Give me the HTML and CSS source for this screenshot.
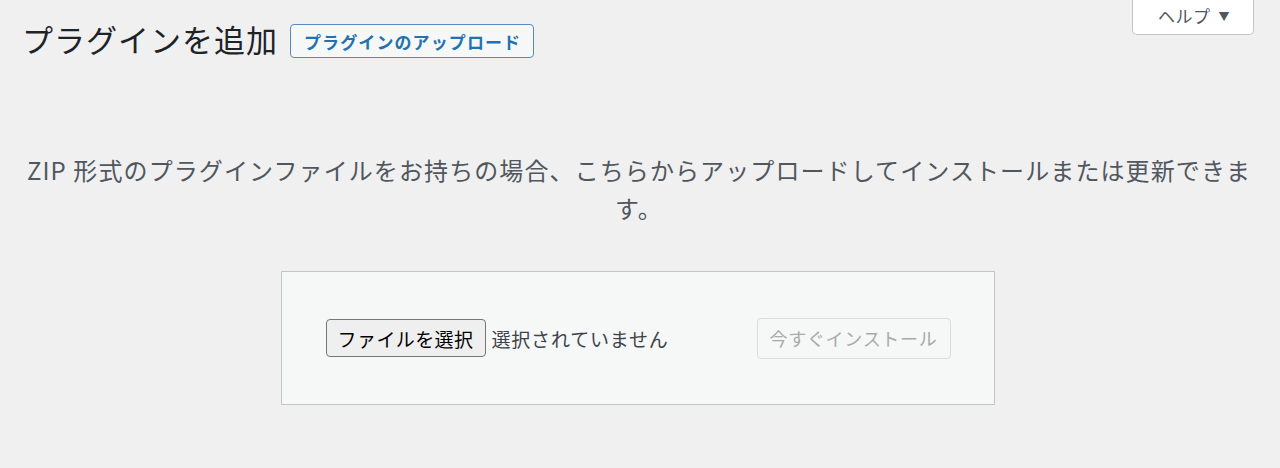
FILE: index.html
```html
<!DOCTYPE html>
<html lang="ja">
<head>
<meta charset="utf-8">
<title>プラグインを追加</title>
<link rel="stylesheet" href="styles.css">
</head>
<body>
<div class="screen-meta">
  <button class="help-tab" type="button">ヘルプ <span class="arrow">▼</span></button>
</div>
<div class="wrap">
  <div class="page-head">
    <h1 class="page-title">プラグインを追加</h1>
    <a class="title-action" href="#">プラグインのアップロード</a>
  </div>
  <div class="upload-plugin">
    <p class="install-help">ZIP 形式のプラグインファイルをお持ちの場合、こちらからアップロードしてインストールまたは更新できます。</p>
    <div class="form-row">
      <form class="upload-form">
        <div class="file-field">
          <span class="file-btn">ファイルを選択</span>
          <span class="file-name">選択されていません</span>
        </div>
        <button class="install-btn" type="button" disabled>今すぐインストール</button>
      </form>
    </div>
  </div>
</div>
</body>
</html>
```

FILE: styles.css
```css
html, body {
  margin: 0;
  padding: 0;
}
body {
  background: #f0f0f1;
  font-family: "Noto Sans CJK JP", "Noto Sans", sans-serif;
  color: #3c434a;
  height: 468px;
  overflow: hidden;
  position: relative;
}
.screen-meta {
  position: absolute;
  top: -1px;
  right: 26px;
}
.help-tab {
  box-sizing: border-box;
  width: 122px;
  height: 36px;
  background: #fff;
  border: 1px solid #c3c4c7;
  border-top: none;
  border-radius: 0 0 5px 5px;
  font-family: inherit;
  font-size: 17px;
  letter-spacing: 0.5px;
  color: #50575e;
  padding: 0 0 2px 2px;
  display: flex;
  align-items: center;
  justify-content: center;
  gap: 8px;
}
.help-tab .arrow {
  font-size: 11px;
  color: #50575e;
}
.wrap {
  padding: 20px 26px 0 24px;
}
.page-head {
  display: flex;
  align-items: center;
  gap: 12px;
}
.page-title {
  margin: 0 0 0 -2px;
  font-size: 31px;
  font-weight: 400;
  line-height: 38px;
  letter-spacing: 1px;
  color: #1d2327;
}
.title-action {
  box-sizing: border-box;
  height: 34px;
  display: flex;
  align-items: center;
  padding: 0 12px 0 13px;
  border: 1.5px solid #5a8ac4;
  border-radius: 4px;
  background: #f6f7f7;
  color: #2271b1;
  font-size: 17px;
  font-weight: 700;
  letter-spacing: 1.1px;
  text-decoration: none;
  margin-top: 4px;
}
.install-help {
  margin: 0;
  padding-top: 93px;
  text-align: center;
  font-size: 24px;
  line-height: 38px;
  letter-spacing: 1.1px;
  color: #50575e;
}
.form-row {
  display: flex;
  justify-content: center;
  padding-top: 44px;
}
.upload-form {
  box-sizing: border-box;
  width: 714px;
  height: 134px;
  background: #f6f7f7;
  border: 1px solid #c3c4c7;
  display: flex;
  align-items: center;
  justify-content: space-between;
  padding: 0 43px 0 44px;
  margin: 0 0 0 -3px;
}
.file-field {
  display: flex;
  align-items: center;
  gap: 6px;
}
.file-btn {
  box-sizing: border-box;
  height: 38px;
  width: 160px;
  display: flex;
  align-items: center;
  justify-content: center;
  background: #efefef;
  border: 1px solid #767676;
  border-radius: 4px;
  font-size: 19px;
  letter-spacing: 0.4px;
  color: #000;
}
.file-name {
  font-size: 19px;
  letter-spacing: 0.8px;
  color: #3c434a;
}
.install-btn {
  box-sizing: border-box;
  height: 41px;
  width: 194px;
  background: #f6f7f7;
  border: 1px solid #dcdcde;
  border-radius: 4px;
  font-family: inherit;
  font-size: 18px;
  letter-spacing: 0.7px;
  color: #a7aaad;
  padding: 0;
}
```
